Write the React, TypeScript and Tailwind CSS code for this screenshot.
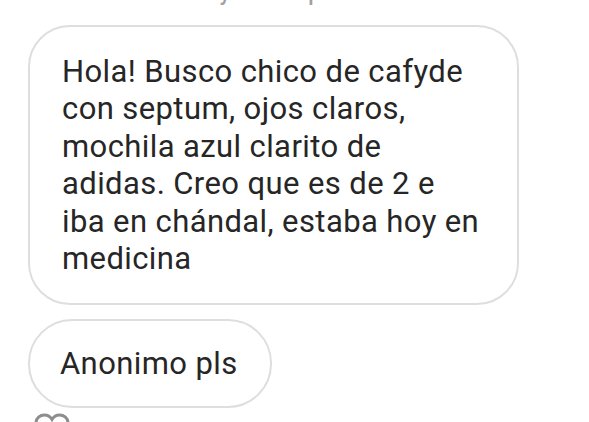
import React from "react";

export default function App() {
  return (
    <div
      className="relative w-[589px] h-[422px] overflow-hidden bg-white text-[#262626]"
      style={{ fontFamily: "Roboto, 'Noto Sans', sans-serif" }}
    >
      <div className="flex justify-center h-[25px] items-start">
        <span className="-mt-[20px] text-[22px] font-medium text-[#a0a0a0] leading-[25px] ml-[-30px] tracking-[0.5px]">
          Ayer 2:50 p.m.
        </span>
      </div>
      <div className="flex flex-col items-start pl-[28px]">
        <div className="w-[491px] h-[280px] rounded-[42px] border-[2px] border-[#dedede] pl-[32px] pr-[10px] pt-[26px] text-[31px] leading-[37.4px] tracking-[0.4px] whitespace-nowrap">
          Hola! Busco chico de cafyde
          <br />
          con septum, ojos claros,
          <br />
          mochila azul clarito de
          <br />
          adidas. Creo que es de 2 e
          <br />
          iba en chándal, estaba hoy en
          <br />
          medicina
        </div>
        <div className="mt-[14px] w-[244px] h-[89px] rounded-[44px] border-[2px] border-[#dedede] pl-[30px] flex items-center text-[31px] leading-[37px] tracking-[0.4px]">
          Anonimo pls
        </div>
        <svg
          className="mt-[5px] ml-[6px]"
          width="36"
          height="32"
          viewBox="0 0 36 32"
          fill="none"
        >
          <path
            d="M18 30 C8 22 2 17 2 10 C2 5 6 2 10.5 2 C14 2 16.5 4 18 6.5 C19.5 4 22 2 25.5 2 C30 2 34 5 34 10 C34 17 28 22 18 30 Z"
            stroke="#8e8e8e"
            strokeWidth="3"
          />
        </svg>
      </div>
    </div>
  );
}
